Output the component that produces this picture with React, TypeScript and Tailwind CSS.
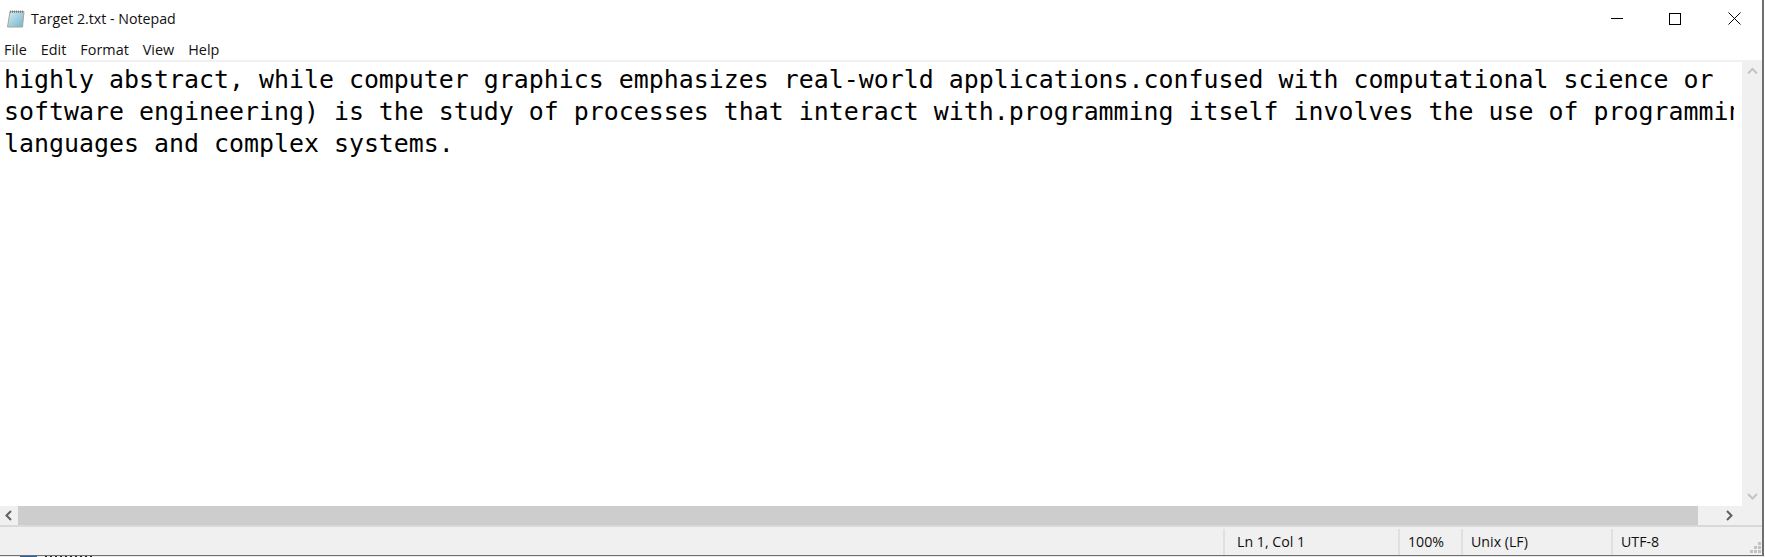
const LINES = [
  "highly abstract, while computer graphics emphasizes real-world applications.confused with computational science or",
  "software engineering) is the study of processes that interact with.programming itself involves the use of programming",
  "languages and complex systems.",
];

const MENU = ["File", "Edit", "Format", "View", "Help"];

function NotepadIcon() {
  return (
    <svg width="20" height="20" viewBox="0 0 20 20" className="shrink-0">
      <defs>
        <linearGradient id="page" x1="0" y1="0" x2="1" y2="1">
          <stop offset="0" stopColor="#d8edf3" />
          <stop offset="1" stopColor="#6fb3cf" />
        </linearGradient>
      </defs>
      <path d="M4 2.500 L18 2.500 L16.500 18 L1.500 18 Z" fill="url(#page)" stroke="#a8a596" strokeWidth="1" />
      <path d="M4.500 1.500 V4 M6.500 1.500 V4 M8.500 1.500 V4 M10.500 1.500 V4 M12.500 1.500 V4 M14.500 1.500 V4 M16.500 1.500 V4" stroke="#808080" strokeWidth="1" />
    </svg>
  );
}

function Chevron({ dir }: { dir: "left" | "right" | "up" | "down" }) {
  const d = {
    left: "M7 1 L2.500 5.500 L7 10",
    right: "M2 1 L6.500 5.500 L2 10",
    up: "M1 7.500 L5.500 3 L10 7.500",
    down: "M1 3 L5.500 7.500 L10 3",
  }[dir];
  return (
    <svg width="11" height="11" viewBox="0 0 11 11" fill="none">
      <path d={d} stroke={dir === "left" || dir === "right" ? "#606060" : "#c4c4c4"} strokeWidth="2" />
    </svg>
  );
}

function Grip() {
  const dots = [
    [8, 0],
    [4, 4],
    [8, 4],
    [0, 8],
    [4, 8],
    [8, 8],
  ];
  return (
    <svg width="11" height="11" viewBox="0 0 11 11" className="absolute right-[1px] bottom-[2px]">
      {dots.map(([x, y]) => (
        <rect key={`${x}-${y}`} x={x} y={y} width="3" height="3" fill="#c2c2c2" />
      ))}
    </svg>
  );
}

export default function App() {
  return (
    <div className="flex h-[557px] w-[1765px] flex-col overflow-hidden bg-white font-['Open_Sans',sans-serif] text-black">
      <div className="mr-[1px] flex min-h-0 flex-1 flex-col border-r-2 border-b border-[#6e6e6e]">
        {/* title bar */}
        <div className="flex h-[37px] shrink-0 items-center pl-[6px]">
          <NotepadIcon />
          <span className="ml-[5px] text-[14.2px] text-[#111]">Target 2.txt - Notepad</span>
          <div className="ml-auto flex items-center pr-[21px]">
            <div className="h-px w-[12px] bg-black" />
            <div className="ml-[46px] size-[12px] border border-black" />
            <svg width="13" height="13" viewBox="0 0 13 13" className="ml-[47px]">
              <path d="M0.500 0.500 L12.500 12.500 M12.500 0.500 L0.500 12.500" stroke="#000" strokeWidth="1" />
            </svg>
          </div>
        </div>
        {/* menu */}
        <div className="flex h-[25px] shrink-0 items-center gap-[14px] border-b-2 border-[#f0f0f0] pt-[2px] pl-[4px] text-[14.4px] text-[#111]">
          {MENU.map((m) => (
            <span key={m}>{m}</span>
          ))}
        </div>
        {/* editor */}
        <div className="flex min-h-0 flex-1">
          <div className="min-w-0 flex-1 pr-[8px]">
            <div className="h-full overflow-hidden pt-[2px] pl-[4px] font-['DejaVu_Sans_Mono',monospace] text-[24.92px] leading-[32px] whitespace-pre">
              {LINES.map((l) => (
                <div key={l}>{l}</div>
              ))}
            </div>
          </div>
          <div className="flex w-[20px] flex-col items-center justify-between bg-[#f0f0f0] py-[4px]">
            <Chevron dir="up" />
            <Chevron dir="down" />
          </div>
        </div>
        {/* horizontal scrollbar */}
        <div className="flex h-[19px] shrink-0 items-center bg-[#f0f0f0]">
          <div className="flex w-[18px] justify-center">
            <Chevron dir="left" />
          </div>
          <div className="h-full w-[1680px] bg-[#cdcdcd]" />
          <div className="flex flex-1 justify-center">
            <Chevron dir="right" />
          </div>
        </div>
        {/* status bar */}
        <div className="relative flex h-[30px] shrink-0 items-end border-t-2 border-[#d9d9d9] bg-[#f0f0f0] text-[14.2px] text-[#111]">
          <div className="flex-1" />
          <div className="h-[26px] w-[175px] border-l-2 border-[#e0e0e0] pl-[12px] leading-[26px]">Ln 1, Col 1</div>
          <div className="h-[26px] w-[63px] border-l-2 border-[#e0e0e0] pl-[8px] leading-[26px]">100%</div>
          <div className="h-[26px] w-[150px] border-l-2 border-[#e0e0e0] pl-[8px] leading-[26px]">Unix (LF)</div>
          <div className="h-[26px] w-[151px] border-l-2 border-[#e0e0e0] pl-[8px] leading-[26px]">UTF-8</div>
          <Grip />
        </div>
      </div>
      {/* sliver of what sits behind the window */}
      <div className="flex h-[1px] shrink-0 items-stretch bg-[#e8e8e8] pl-[20px]">
        <div className="w-[17px] bg-[#2f5f8f]" />
        <div className="ml-[8px] w-[50px] bg-[repeating-linear-gradient(90deg,#222_0px,#222_2px,transparent_2px,transparent_5px)]" />
      </div>
    </div>
  );
}
